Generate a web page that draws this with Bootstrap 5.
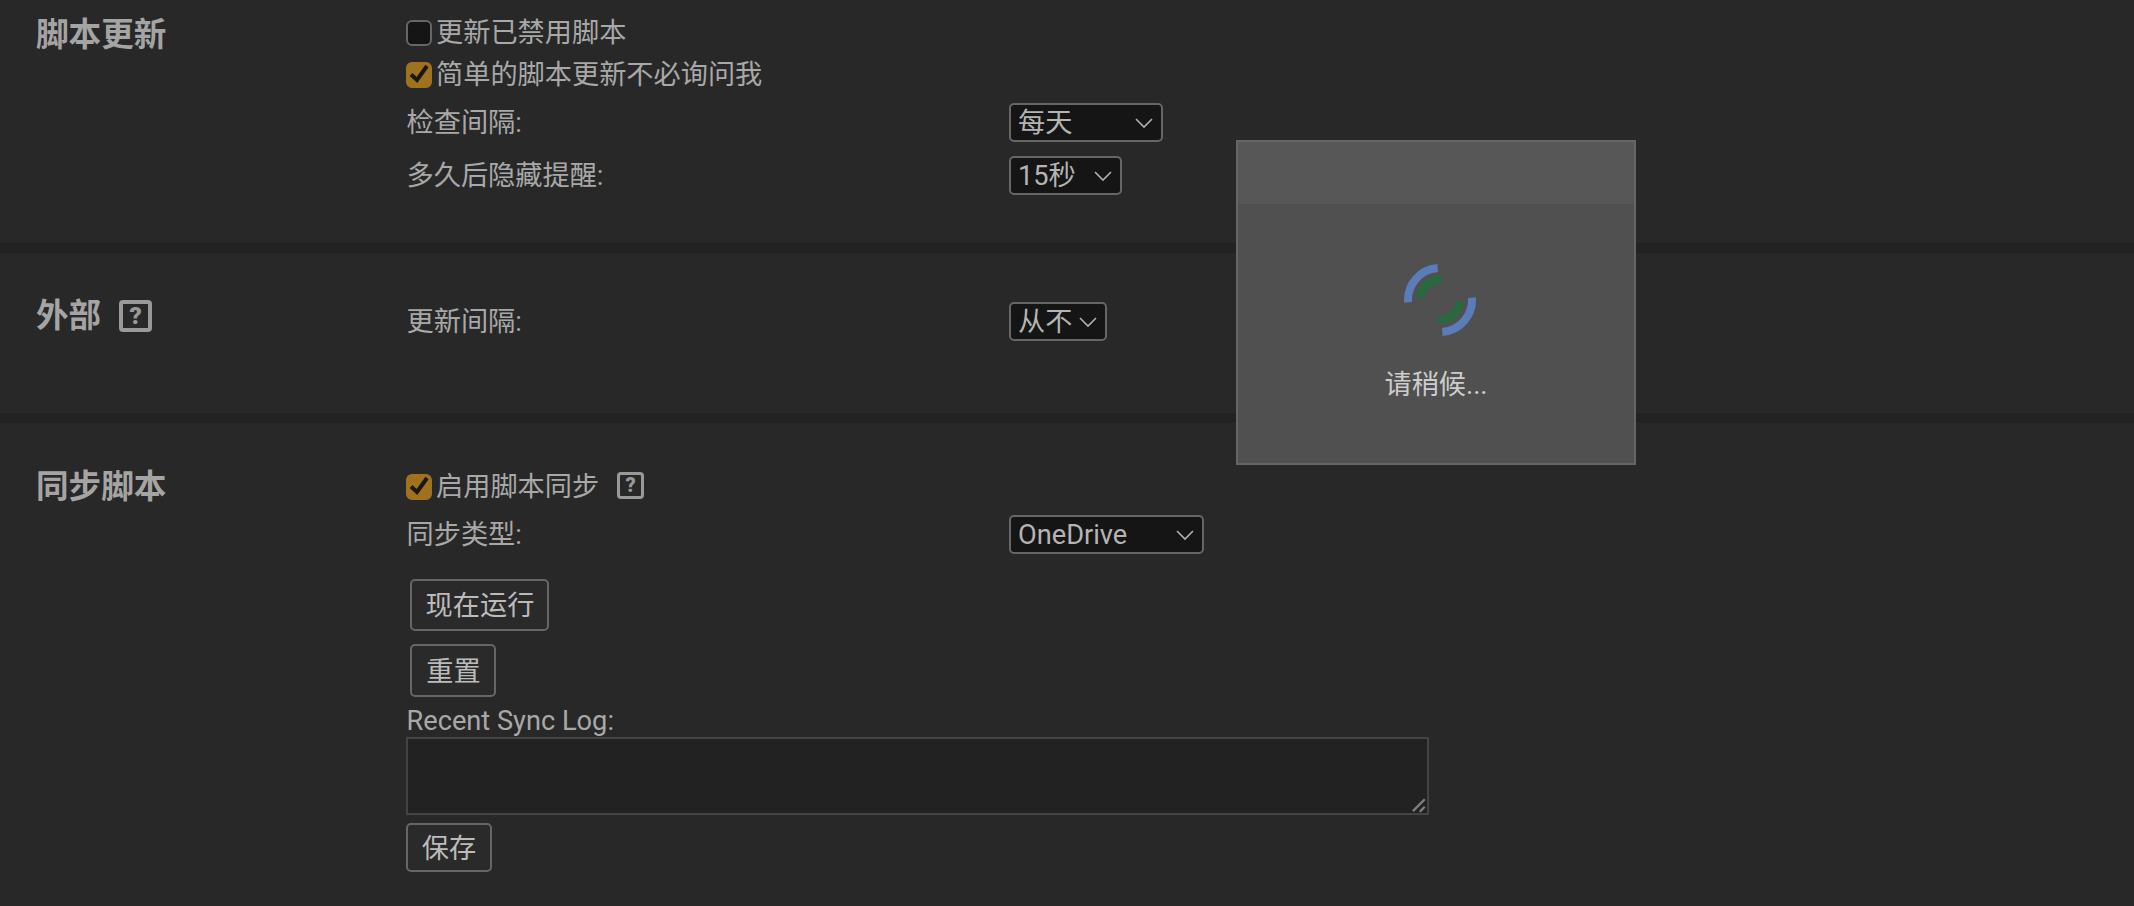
<!DOCTYPE html>
<html lang="zh-CN">
<head>
    <meta charset="UTF-8">
    <meta name="viewport" content="width=device-width, initial-scale=1.0">
    <title>脚本设置</title>
    <link href="https://cdn.jsdelivr.net/npm/bootstrap@5.3.2/dist/css/bootstrap.min.css" rel="stylesheet">
    <style>
        html, body {
            height: 906px;
            overflow: hidden;
        }
        body {
            font-family: Roboto, "Noto Sans CJK SC", sans-serif;
            font-size: 27.2px;
            line-height: 30px;
            background-color: #222;
            color: #a8a8a8;
        }
        .opt-section {
            background: #282828;
            padding-left: 36px;
            margin-bottom: 10px;
        }
        .sec-one { height: 243px; padding-top: 12px; }
        .sec-two { height: 160px; padding-top: 49px; }
        .sec-three { height: 483px; padding-top: 43px; margin-bottom: 0; }
        .sec-title {
            width: 370px;
            flex: none;
            align-self: flex-start;
            font-size: 32.6px;
            line-height: 40px;
            font-weight: 700;
            color: #a4a4a4;
        }
        .sec-one .sec-title { margin-top: 3px; }
        .sec-two .sec-title { margin-top: -6px; }
        .sec-three .sec-title { margin-top: 1px; }
        .help-box {
            display: inline-flex;
            align-items: center;
            justify-content: center;
            width: 33px;
            height: 32px;
            margin-left: 18px;
            border: 4px solid #999;
            border-radius: 4px;
            font-size: 24px;
            line-height: 1;
            font-weight: 900;
            color: #999;
        }
        .help-box.help-small {
            width: 27px;
            height: 27px;
            margin-left: 18px;
            margin-top: -4px;
            border-width: 3px;
            font-size: 20px;
        }
        .check-row { height: 42px; }
        .check-row .form-check-input {
            width: 26px;
            height: 26px;
            margin: 0 4px 0 0;
            flex: none;
            background-color: #151515;
            border: 2px solid #666;
            border-radius: 6px;
        }
        .check-row .form-check-input:checked {
            background-color: #a0721e;
            border-color: #a0721e;
            background-size: 26px 26px;
            background-position: -2px -2px;
            background-image: url("data:image/svg+xml,%3Csvg xmlns='http://www.w3.org/2000/svg' viewBox='0 0 26 26'%3E%3Cpath fill='none' stroke='%23181818' stroke-width='4' d='M5 12.5l6 5.5 10-14'/%3E%3C/svg%3E");
        }
        .check-row .form-check-label { margin-top: -1px; }
        .field-row { height: 39px; }
        .field-label { width: 603px; flex: none; padding-left: 0.5px; }
        .drop {
            height: 39px;
            padding: 1px 0 0 7px;
            font-size: 27.2px;
            line-height: 35px;
            color: #b4b4b4;
            background-color: #151515;
            border: 2px solid #666;
            border-radius: 5px;
            background-position: right 7px center;
            background-size: 20px 12px;
            background-image: url("data:image/svg+xml,%3Csvg xmlns='http://www.w3.org/2000/svg' viewBox='0 0 20 12'%3E%3Cpath fill='none' stroke='%23b0b0b0' stroke-width='1.6' d='M2 2l8 8 8-8'/%3E%3C/svg%3E");
        }
        .w-daily { width: 154px; }
        .w-secs { width: 113px; }
        .w-never { width: 98px; }
        .w-sync { width: 195px; }
        .after-checks { margin-top: 7px; }
        .second-field { margin-top: 14px; }
        .sync-type { margin-top: 7px; }
        .flat-btn {
            display: block;
            padding: 2px 0 0;
            font-size: 27.2px;
            line-height: 30px;
            white-space: nowrap;
            color: #bbb;
            background: #2a2a2a;
            border: 2px solid #666;
            border-radius: 5px;
        }
        .flat-btn:hover { color: #ccc; background: #333; border-color: #777; }
        .run-btn { width: 139px; height: 52px; margin: 25px 0 0 4px; padding-left: 1px; }
        .reset-btn { width: 86px; height: 53px; margin: 13px 0 0 4px; padding-left: 1px; }
        .save-btn { width: 86px; height: 49px; margin-top: 8px; }
        .log-label { display: block; margin: 9px 0 1px 0.5px; }
        .log-box {
            display: block;
            width: 1023px;
            height: 78px;
            background: #222;
            border: 2px solid #444;
            color: #bbb;
            border-radius: 0;
            outline: 0;
        }
        .log-box::-webkit-resizer {
            background: url("data:image/svg+xml,%3Csvg xmlns='http://www.w3.org/2000/svg' viewBox='0 0 16 16'%3E%3Cpath fill='none' stroke='%23808080' stroke-width='2.4' d='M1 14L13.6 1.3M8.3 14.7l5.3-5.4'/%3E%3C/svg%3E") no-repeat;
        }
        .wait-dialog {
            position: absolute;
            top: 140px;
            left: 1236px;
            width: 400px;
            height: 325px;
            background: #505050;
            border: 2px solid #666;
            border-radius: 0;
            color: #ccc;
        }
        .wait-dialog .card-header {
            height: 62px;
            background: #575757;
            border: 0;
            border-radius: 0;
        }
        .wait-dialog .card-body { padding: 60px 0 0; }
        .spin-mark { display: block; margin-left: 8px; }
        .wait-text { margin-top: 34px; text-align: center; }
    </style>
</head>
<body>
    <section class="opt-section sec-one d-flex">
        <div class="sec-title">脚本更新</div>
        <div class="flex-grow-1">
            <div class="check-row d-flex align-items-center">
                <input class="form-check-input" type="checkbox" id="updDisabled">
                <label class="form-check-label" for="updDisabled">更新已禁用脚本</label>
            </div>
            <div class="check-row d-flex align-items-center">
                <input class="form-check-input" type="checkbox" id="updSilent" checked>
                <label class="form-check-label" for="updSilent">简单的脚本更新不必询问我</label>
            </div>
            <div class="field-row after-checks d-flex align-items-center">
                <div class="field-label">检查间隔:</div>
                <select class="form-select drop w-daily"><option>每天</option></select>
            </div>
            <div class="field-row second-field d-flex align-items-center">
                <div class="field-label">多久后隐藏提醒:</div>
                <select class="form-select drop w-secs"><option>15秒</option></select>
            </div>
        </div>
    </section>

    <section class="opt-section sec-two d-flex">
        <div class="sec-title d-flex align-items-center">外部<span class="help-box">?</span></div>
        <div class="flex-grow-1">
            <div class="field-row d-flex align-items-center">
                <div class="field-label">更新间隔:</div>
                <select class="form-select drop w-never"><option>从不</option></select>
            </div>
        </div>
    </section>

    <section class="opt-section sec-three d-flex">
        <div class="sec-title">同步脚本</div>
        <div class="flex-grow-1">
            <div class="check-row d-flex align-items-center">
                <input class="form-check-input" type="checkbox" id="syncOn" checked>
                <label class="form-check-label" for="syncOn">启用脚本同步</label>
                <span class="help-box help-small">?</span>
            </div>
            <div class="field-row sync-type d-flex align-items-center">
                <div class="field-label">同步类型:</div>
                <select class="form-select drop w-sync"><option>OneDrive</option></select>
            </div>
            <button type="button" class="btn flat-btn run-btn">现在运行</button>
            <button type="button" class="btn flat-btn reset-btn">重置</button>
            <label class="log-label" for="syncLog">Recent Sync Log:</label>
            <textarea class="log-box" id="syncLog"></textarea>
            <button type="button" class="btn flat-btn save-btn">保存</button>
        </div>
    </section>

    <div class="card wait-dialog">
        <div class="card-header"></div>
        <div class="card-body d-flex flex-column align-items-center">
            <svg class="spin-mark" width="72" height="72" viewBox="-36 -36 72 72" fill="none">
                <path d="M-2.34 -31.9A32 32 0 0 0 -31.9 2.34" stroke="#5a7cb8" stroke-width="8"/>
                <path d="M2.34 31.9A32 32 0 0 0 31.9 -2.34" stroke="#5a7cb8" stroke-width="8"/>
                <path d="M1.74 -19.9A20 20 0 0 0 -19.9 -1.74" stroke="#276a3f" stroke-width="8"/>
                <path d="M-1.74 19.9A20 20 0 0 0 19.9 1.74" stroke="#276a3f" stroke-width="8"/>
            </svg>
            <div class="wait-text">请稍候...</div>
        </div>
    </div>

    <script src="https://cdn.jsdelivr.net/npm/bootstrap@5.3.2/dist/js/bootstrap.bundle.min.js"></script>
</body>
</html>
